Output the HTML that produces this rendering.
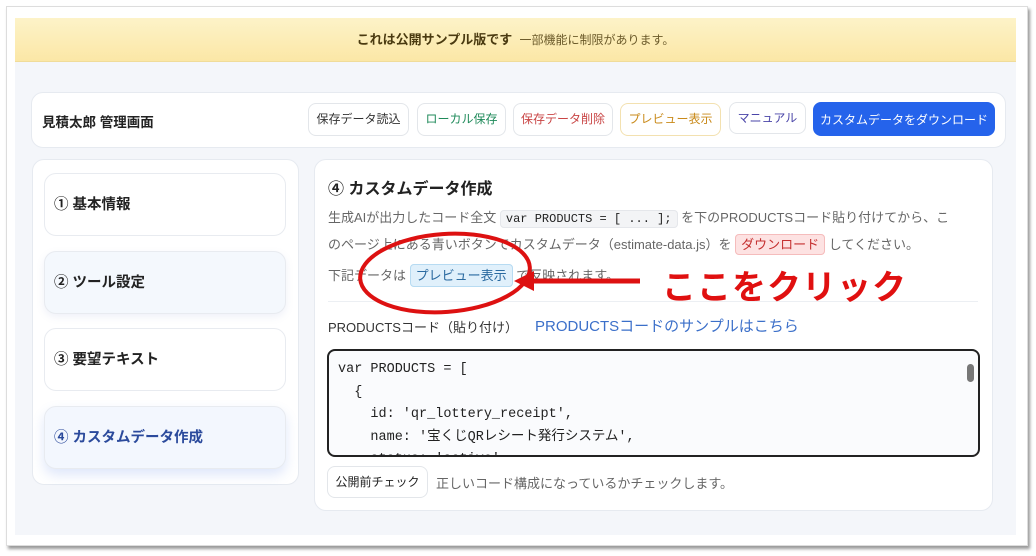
<!DOCTYPE html><html><head><meta charset="utf-8"><style>
*{box-sizing:border-box;margin:0;padding:0}
body{width:1036px;height:556px;background:#fff;font-family:"Liberation Sans","Noto Sans CJK JP",sans-serif;position:relative;overflow:hidden;color:#222}
.a{position:absolute}
.frame{left:6px;top:6px;width:1022px;height:540px;border:1px solid #ddd;box-shadow:2px 3px 3px #999;background:#fff}
.bg{left:15px;top:18px;width:1001px;height:517px;background:#f4f6fa}
.banner{left:15px;top:18px;width:1001px;height:44px;background:linear-gradient(#fdf3c8,#fbe7a6);border-bottom:1px solid #f0dc9a;text-align:center;font-size:13px;line-height:44px;color:#6b5a2a}
.card{background:#fff;border:1px solid #e6eaf0;border-radius:12px}
.btn{position:absolute;top:103px;height:33px;border:1px solid #e3e6ea;border-radius:8px;background:#fff;font-size:12px;line-height:31px;text-align:center}
.item{position:absolute;left:44px;width:242px;height:63px;border:1px solid #e8ebf0;border-radius:12px;background:#fff;font-size:14.5px;font-weight:bold;line-height:63px;padding-left:9px}
.p{font-size:13px;color:#666;position:absolute;left:328px}
.code{font-family:"Liberation Mono","DejaVu Sans Mono","Noto Sans CJK JP",monospace}
</style></head><body>
<div class="a frame"></div>
<div class="a bg"></div>
<div class="a banner"><b style="color:#4a3a10">これは公開サンプル版です</b>&nbsp; <span style="font-size:12px">一部機能に制限があります。</span></div>
<div class="a card" style="left:31px;top:92px;width:975px;height:56px"></div>
<div class="a" style="left:42px;top:111px;font-size:13.5px;font-weight:bold">見積太郎 管理画面</div>
<div class="btn" style="left:308px;width:101px;color:#333">保存データ読込</div>
<div class="btn" style="left:417px;width:89px;color:#1f8a5a">ローカル保存</div>
<div class="btn" style="left:513px;width:100px;color:#c94545">保存データ削除</div>
<div class="btn" style="left:620px;width:101px;color:#c98a1a;border-color:#f3e1b0">プレビュー表示</div>
<div class="btn" style="left:729px;width:77px;color:#4a45a8;top:102px;height:32px">マニュアル</div>
<div class="btn" style="left:813px;width:182px;background:#2563eb;border-color:#2563eb;color:#fff;top:102px;height:34px;line-height:34px">カスタムデータをダウンロード</div>
<div class="a card" style="left:32px;top:159px;width:267px;height:326px"></div>
<div class="item" style="top:173px">① 基本情報</div>
<div class="item" style="top:251px;background:#f4f8fd;box-shadow:0 3px 8px rgba(120,140,200,.12)">② ツール設定</div>
<div class="item" style="top:328px">③ 要望テキスト</div>
<div class="item" style="top:406px;background:#f3f7fe;color:#2b4a9c;box-shadow:0 6px 12px rgba(80,120,230,.18)">④ カスタムデータ作成</div>
<div class="a card" style="left:314px;top:159px;width:679px;height:352px"></div>
<div class="a" style="left:328px;top:175px;font-size:16px;font-weight:bold">④ カスタムデータ作成</div>
<div class="p" style="top:205px;line-height:25px;width:660px;white-space:nowrap">生成AIが出力したコード全文 <span class="code" style="background:#f3f4f6;border:1px solid #e5e7eb;border-radius:4px;padding:1px 5px;color:#222;font-size:12px">var PRODUCTS = [ ... ];</span> を下のPRODUCTSコード貼り付けてから、こ<br>のページ上にある青いボタンでカスタムデータ（estimate-data.js）を <span style="background:#fde2e2;border:1px solid #f5bcbc;border-radius:4px;padding:2px 5px;color:#c53030">ダウンロード</span> してください。</div>
<div class="p" style="top:265px">下記データは <span style="background:#e0f0fb;border:1px solid #b7dbf2;border-radius:4px;padding:3px 5px;color:#2a6aa0">プレビュー表示</span> で反映されます。</div>
<div class="a" style="left:328px;top:301px;width:650px;height:1px;background:#eceff3"></div>
<div class="a" style="left:328px;top:317px;font-size:13px;color:#333">PRODUCTSコード（貼り付け）</div>
<div class="a" style="left:535px;top:315px;font-size:15px;color:#3b6fc9">PRODUCTSコードのサンプルはこちら</div>
<div class="a code" style="left:327px;top:349px;width:653px;height:108px;border:2px solid #222;border-radius:8px;background:#fafbfd;overflow:hidden;padding:8px 0 0 9px;font-size:13.5px;line-height:22.5px;white-space:pre;color:#222">var PRODUCTS = [
  {
    id: 'qr_lottery_receipt',
    name: '宝くじQRレシート発行システム',
    status: 'active',</div>
<div class="a" style="left:967px;top:364px;width:7px;height:18px;background:#777;border-radius:4px"></div>
<div class="a" style="left:327px;top:466px;width:101px;height:32px;border:1px solid #e3e6ea;border-radius:8px;background:#fff;font-size:12px;line-height:30px;text-align:center">公開前チェック</div>
<div class="a" style="left:436px;top:473px;font-size:13px;color:#666">正しいコード構成になっているかチェックします。</div>
<svg class="a" style="left:0;top:0" width="1036" height="556">
<ellipse cx="445" cy="273" rx="85" ry="39" fill="none" stroke="#dd1111" stroke-width="4" transform="rotate(-4 445 273)"/>
<line x1="640" y1="281" x2="530" y2="281" stroke="#dd1111" stroke-width="5"/>
<polygon points="514,281 534,271 534,291" fill="#dd1111"/>
</svg>
<div class="a" style="left:662px;top:260px;font-size:34px;font-weight:bold;color:#e01010;letter-spacing:1px">ここをクリック</div>
</body></html>
